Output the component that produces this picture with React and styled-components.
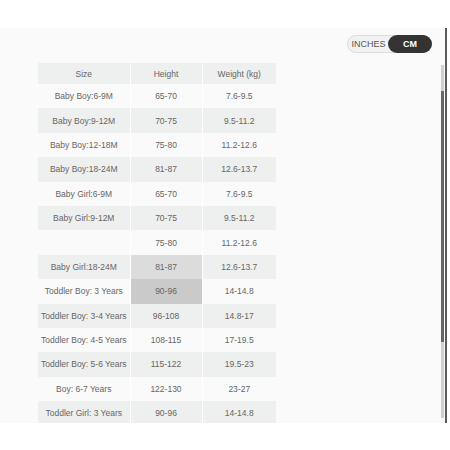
import React from 'react';
import styled, { createGlobalStyle } from 'styled-components';

const rows = [
  { size: 'Baby Boy:6-9M', height: '65-70', weight: '7.6-9.5' },
  { size: 'Baby Boy:9-12M', height: '70-75', weight: '9.5-11.2' },
  { size: 'Baby Boy:12-18M', height: '75-80', weight: '11.2-12.6' },
  { size: 'Baby Boy:18-24M', height: '81-87', weight: '12.6-13.7' },
  { size: 'Baby Girl:6-9M', height: '65-70', weight: '7.6-9.5' },
  { size: 'Baby Girl:9-12M', height: '70-75', weight: '9.5-11.2' },
  { size: '', height: '75-80', weight: '11.2-12.6' },
  { size: 'Baby Girl:18-24M', height: '81-87', weight: '12.6-13.7', mark: 'hover' },
  { size: 'Toddler Boy: 3 Years', height: '90-96', weight: '14-14.8', mark: 'active' },
  { size: 'Toddler Boy: 3-4 Years', height: '96-108', weight: '14.8-17' },
  { size: 'Toddler Boy: 4-5 Years', height: '108-115', weight: '17-19.5' },
  { size: 'Toddler Boy: 5-6 Years', height: '115-122', weight: '19.5-23' },
  { size: 'Boy: 6-7 Years', height: '122-130', weight: '23-27' },
  { size: 'Toddler Girl: 3 Years', height: '90-96', weight: '14-14.8' },
];

const SizeChart = () => {
  const [unit, setUnit] = React.useState('cm');

  return (
    <Panel>
      <Main>
        <ToolRow>
          <Toggle>
            <ToggleButton $on={unit === 'in'} onClick={() => setUnit('in')}>INCHES</ToggleButton>
            <ToggleButton $on={unit === 'cm'} onClick={() => setUnit('cm')}>CM</ToggleButton>
          </Toggle>
        </ToolRow>
        <Table>
          <colgroup>
            <col style={{ width: 92 }} />
            <col style={{ width: 72 }} />
            <col style={{ width: 74 }} />
          </colgroup>
          <thead>
            <HeadRow>
              <Th>Size</Th>
              <Th>Height</Th>
              <Th>Weight (kg)</Th>
            </HeadRow>
          </thead>
          <tbody>
            {rows.map((r, idx) => (
              <Row key={idx} $striped={idx % 2 === 1}>
                <Td>{r.size}</Td>
                <Td $mark={r.mark}>{r.height}</Td>
                <Td>{r.weight}</Td>
              </Row>
            ))}
          </tbody>
        </Table>
      </Main>
      <Rail>
        <Thumb />
      </Rail>
    </Panel>
  );
};

const GlobalStyle = createGlobalStyle`
  body {
    margin: 0;
    background: #fff;
    font-family: "Liberation Sans", Arial, sans-serif;
  }
`;

const Panel = styled.div`
  display: flex;
  margin-top: 28px;
  width: 447px;
  height: 395px;
  box-sizing: border-box;
  border-right: 2px solid #5a5a5a;
  background-color: #fafafa;
  overflow: hidden;
`;

const Main = styled.div`
  flex: 1;
  padding: 7px 9px 0 38px;
  overflow: hidden;
`;

const ToolRow = styled.div`
  display: flex;
  justify-content: flex-end;
  margin-bottom: 10px;
`;

const Toggle = styled.div`
  display: flex;
  height: 18px;
  box-sizing: border-box;
  border: 1px solid #dcdcdc;
  border-radius: 10px;
  background: #f2f2f2;
`;

const ToggleButton = styled.button`
  display: flex;
  align-items: center;
  justify-content: center;
  width: ${(p) => (p.$on ? '44px' : '43px')};
  margin: -1px;
  padding: 0;
  border: none;
  border-radius: 10px;
  background: ${(p) => (p.$on ? '#333' : 'transparent')};
  color: ${(p) => (p.$on ? '#fff' : '#555')};
  font-family: "Liberation Sans", Arial, sans-serif;
  font-size: 9px;
  font-weight: ${(p) => (p.$on ? 700 : 400)};
  cursor: pointer;
`;

const Table = styled.table`
  width: 238px;
  table-layout: fixed;
  border-collapse: collapse;
  color: #666;
  font-size: 8.5px;
  text-align: center;
`;

const HeadRow = styled.tr`
  height: 21px;
  background: #eeefef;
`;

const Th = styled.th`
  padding: 0;
  font-weight: 400;
  border-right: 1px solid #fff;
  &:last-child {
    border-right: none;
  }
`;

const Row = styled.tr`
  height: 24.4px;
  background: ${(p) => (p.$striped ? '#eeefef' : 'transparent')};
`;

const Td = styled.td`
  padding: 0;
  white-space: nowrap;
  border-right: 1px solid #fff;
  background: ${(p) =>
    p.$mark === 'hover' ? '#dcdcdc' : p.$mark === 'active' ? '#cacaca' : 'transparent'};
  &:last-child {
    border-right: none;
  }
`;

const Rail = styled.div`
  width: 3px;
  margin: 37px 1px 5px 0;
  padding-top: 26px;
  background: #cfcfcf;
`;

const Thumb = styled.div`
  height: 251px;
  background: #666;
`;

const App = () => (
  <>
    <GlobalStyle />
    <SizeChart />
  </>
);

export default App;
